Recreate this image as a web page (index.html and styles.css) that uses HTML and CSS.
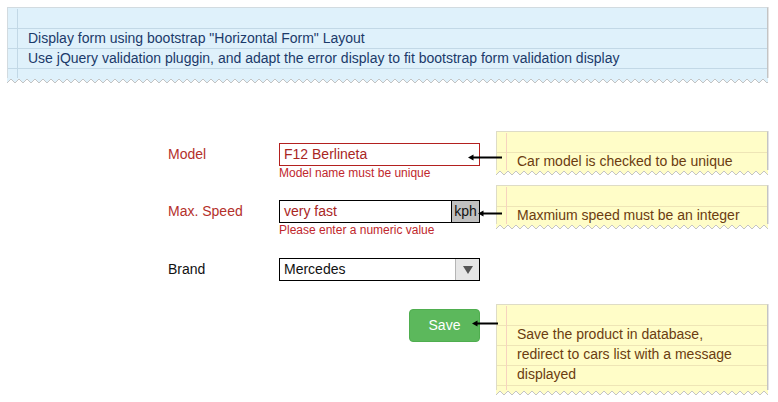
FILE: index.html
```html
<!DOCTYPE html>
<html>
<head>
<meta charset="utf-8">
<title>Horizontal form mockup</title>
<link rel="stylesheet" href="styles.css">
</head>
<body>
<div class="note note-blue">
  <p>Display form using bootstrap "Horizontal Form" Layout</p>
  <p>Use jQuery validation pluggin, and adapt the error display to fit bootstrap form validation display</p>
</div>

<form class="form">
  <div class="row row-model">
    <label class="label label-error label-model">Model</label>
    <div class="field field-model">
      <div class="input input-error">F12 Berlineta</div>
      <div class="help">Model name must be unique</div>
    </div>
    <div class="note note-yellow note-short">
      <svg class="arrow arrow-1" width="34" height="7" viewBox="0 0 34 7"><line x1="4" y1="3.5" x2="34" y2="3.5" stroke="#000" stroke-width="2"/><polygon points="0,3.5 5.5,0.5 5.5,6.5" fill="#000"/></svg>
      <p>Car model is checked to be unique</p>
    </div>
  </div>

  <div class="row row-speed">
    <label class="label label-error label-speed">Max. Speed</label>
    <div class="field field-speed">
      <div class="input input-group">
        <span class="input-text text-error">very fast</span>
        <span class="addon">kph</span>
      </div>
      <div class="help">Please enter a numeric value</div>
    </div>
    <div class="note note-yellow note-short">
      <svg class="arrow arrow-2" width="24" height="7" viewBox="0 0 24 7"><line x1="4" y1="3.5" x2="24" y2="3.5" stroke="#000" stroke-width="2"/><polygon points="0,3.5 5.5,0.5 5.5,6.5" fill="#000"/></svg>
      <p>Maxmium speed must be an integer</p>
    </div>
  </div>

  <div class="row row-brand">
    <label class="label">Brand</label>
    <div class="field">
      <div class="input select">
        <span class="input-text">Mercedes</span>
        <span class="select-btn"><svg width="10" height="8" viewBox="0 0 10 8"><polygon points="0,0 10,0 5,8" fill="#555"/></svg></span>
      </div>
    </div>
  </div>

  <div class="row row-save">
    <span class="label"></span>
    <div class="field field-save">
      <button type="button" class="btn-save">Save</button>
    </div>
    <div class="note note-yellow note-tall">
      <svg class="arrow arrow-3" width="26" height="7" viewBox="0 0 26 7"><line x1="4" y1="3.5" x2="26" y2="3.5" stroke="#000" stroke-width="2"/><polygon points="0,3.5 5.5,0.5 5.5,6.5" fill="#000"/></svg>
      <p>Save the product in database,</p>
      <p>redirect to cars list with a message</p>
      <p>displayed</p>
    </div>
  </div>
</form>
</body>
</html>
```

FILE: styles.css
```css
* {
  box-sizing: border-box;
  margin: 0;
  padding: 0;
}

html, body {
  background: #fff;
}

body {
  margin: 0;
  width: 778px;
  height: 402px;
  overflow: hidden;
  font-family: "Liberation Sans", Arial, sans-serif;
  color: #111;
}

/* ---------- sticky notes ---------- */
.note {
  position: relative;
  font-size: 14px;
  line-height: 20px;
  border: 1px solid var(--edge);
  border-bottom: 0;
  border-right-color: #c4c4c4;
  box-shadow: 1px 0 0 #e4e4e4;
  padding: 20px 0 0 20px;
  color: var(--ink);
  background:
    linear-gradient(var(--bg), var(--bg)) 0 0 / 100% 1px no-repeat,
    linear-gradient(to right, transparent 9px, var(--vline) 9px, var(--vline) 10px, transparent 10px),
    linear-gradient(var(--line) 1px, transparent 1px) 0 0 / 100% 20px,
    var(--bg);
}

.note-yellow p {
  margin-top: -1px;
  margin-bottom: 1px;
}

.note::after {
  content: "";
  position: absolute;
  left: -1px;
  right: -1px;
  top: 100%;
  height: 5px;
  background:
    linear-gradient(-45deg, transparent 5.66px, var(--bg) 0) 0 0 / 8px 5px repeat-x,
    linear-gradient(45deg, transparent 5.66px, var(--bg) 0) 0 0 / 8px 5px repeat-x;
  filter: drop-shadow(0 1px 0 #c4c4c4);
}

.note-blue {
  --bg: #dff1fb;
  --line: #c2d8e6;
  --vline: #c2d8e6;
  --edge: #d2dbe0;
  --ink: #1b3a6a;
  margin: 7px 0 0 7px;
  width: 761px;
  padding-bottom: 10px;
}

.note-yellow {
  --bg: #fffdc8;
  --line: #eee5b6;
  --vline: #f6d3bf;
  --edge: #dedcc6;
  --ink: #6b3c10;
  width: 272px;
  margin-left: 16px;
  padding-left: 20px;
}

.note-short {
  height: 39px;
}

.note-tall {
  padding-bottom: 5px;
}

.arrow {
  position: absolute;
  display: block;
}

.arrow-1 { left: -29px; top: 22px; }
.arrow-2 { left: -19px; top: 24px; }
.arrow-3 { left: -25px; top: 15px; }

/* ---------- form ---------- */
.form {
  margin-left: 168px;
  margin-top: 53px;
  display: flex;
  flex-direction: column;
}

.row {
  display: grid;
  grid-template-columns: 111px 201px 288px;
  align-items: start;
}

.row-speed { margin-top: 4px; }
.row-brand { margin-top: 20px; }
.row-save  { margin-top: 23px; }

.label {
  font-size: 14px;
  line-height: 23px;
  color: #111;
}

.label-model { margin-top: 12px; }
.label-speed { margin-top: 15px; }

.label-error {
  color: #b4302b;
}

.field-model { margin-top: 12px; }
.field-speed { margin-top: 15px; }

.input {
  height: 23px;
  border: 1px solid #000;
  font-size: 14px;
  line-height: 21px;
  padding-left: 4px;
  background: #fff;
  color: #111;
}

.input-error {
  border-color: #b3201f;
  color: #a9261f;
}

.input-group,
.select {
  display: flex;
  padding-left: 0;
}

.input-text {
  flex: 1;
  padding-left: 4px;
}

.text-error {
  color: #a9261f;
}

.addon {
  width: 28px;
  background: #c0c0c0;
  border-left: 1px solid #000;
  text-align: center;
  color: #111;
}

.select-btn {
  width: 24px;
  background: #e6e6e6;
  border-left: 1px solid #b5b5b5;
  display: flex;
  align-items: center;
  justify-content: center;
}

.help {
  font-size: 12px;
  line-height: 15px;
  color: #c0272d;
}

.field-save {
  display: flex;
  justify-content: flex-end;
  padding-top: 5px;
}

.btn-save {
  width: 71px;
  height: 33px;
  border: 1px solid #4fae4f;
  border-radius: 4px;
  background: #5cb85c;
  color: #fff;
  font-family: "Liberation Sans", Arial, sans-serif;
  font-size: 14px;
  line-height: 31px;
  padding: 0;
}
```
